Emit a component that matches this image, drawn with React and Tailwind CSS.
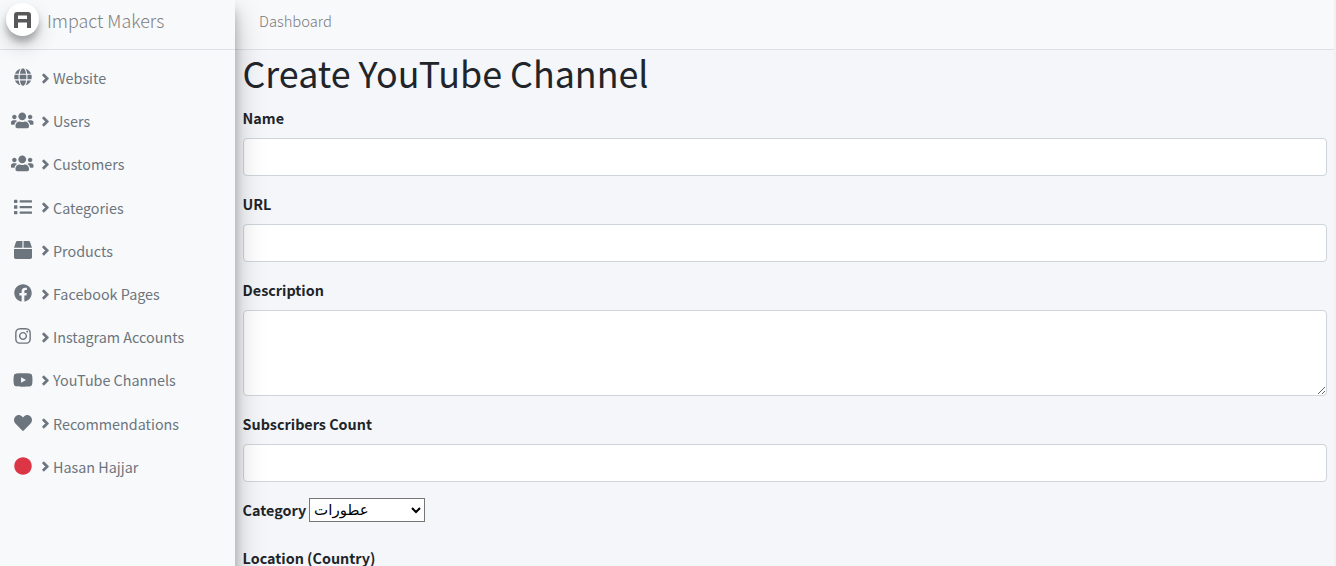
import React from 'react';
import { FaGlobe, FaUsers, FaList, FaBox, FaFacebook, FaInstagram, FaYoutube, FaHeart, FaCircle, FaAngleRight } from 'react-icons/fa';

const items = [
  ['Website', FaGlobe, 'size-[18px]'],
  ['Users', FaUsers, 'size-[22.5px]'],
  ['Customers', FaUsers, 'size-[22.5px]'],
  ['Categories', FaList, 'size-[18px]'],
  ['Products', FaBox, 'size-[18px]'],
  ['Facebook Pages', FaFacebook, 'size-[18px]'],
  ['Instagram Accounts', FaInstagram, 'size-[18px]'],
  ['YouTube Channels', FaYoutube, 'size-[20px]'],
  ['Recommendations', FaHeart, 'size-[18px]'],
  ['Hasan Hajjar', FaCircle, 'size-[18px] text-[#dc3545]'],
];

function Sidebar() {
  return (
    <aside className="relative z-10 h-[700px] w-[235px] shrink-0 bg-[#f8f9fb] shadow-[0_14px_28px_rgba(0,0,0,0.25),0_10px_10px_rgba(0,0,0,0.22)]">
      <div className="flex h-[50px] items-start border-b border-[#dee2e6] pl-[6px] pt-[3px]">
        <div className="flex size-[33px] items-center justify-center rounded-full bg-white shadow-[0_10px_20px_rgba(0,0,0,0.19),0_6px_6px_rgba(0,0,0,0.23)]">
          <svg className="h-4 w-[17px]" viewBox="0 0 17 16">
            <path d="M0 16V3Q0 0 3 0H14Q17 0 17 3V16H13V10.5H4V16ZM4 3.5V7H13V3.5Z" fill="#58585a" fillRule="evenodd" />
          </svg>
        </div>
        <span className="ml-2 mt-[2px] text-[17.9px] font-light leading-[30px] text-[#808081]">Impact Makers</span>
      </div>
      <nav className="flex flex-col pt-[6.5px] text-[#6c757d]">
        {items.map(([label, Icon, cls]) => (
          <a key={label} className="flex h-[43.2px] items-center">
            <span className="flex w-[45.4px] justify-center pb-[1.6px]">
              <Icon className={cls} />
            </span>
            <FaAngleRight className="-ml-[7px] mr-[-0.4px] size-[15px] stroke-current stroke-[20px]" />
            <span className="text-[14.35px] leading-6">{label}</span>
          </a>
        ))}
      </nav>
    </aside>
  );
}

function Field({ label, area }) {
  return (
    <div className="mb-4">
      <label className="mb-2 block text-[14.35px] font-bold leading-6 -ml-[0.4px]">{label}</label>
      {area ? (
        <textarea className="block h-[86px] w-full resize-y rounded border border-[#ced4da] bg-white outline-none" />
      ) : (
        <input className="block h-[38px] w-full rounded border border-[#ced4da] bg-white outline-none" />
      )}
    </div>
  );
}

export default function App() {
  return (
    <div className="flex h-[566px] w-full overflow-hidden bg-[#f4f6f9] font-['Noto_Sans_CJK_SC','Noto_Sans',sans-serif] text-[#212529]">
      <Sidebar />
      <main className="min-w-0 flex-1">
        <header className="flex h-[50px] border-b border-[#dee2e6] bg-[#f8f9fb] pl-6 pt-[9px]">
          <span className="text-[14.75px] font-light leading-6 text-[#7b7b7c]">Dashboard</span>
        </header>
        <div className="px-2 pr-[7px]">
          <h1 className="mb-2 h-12 whitespace-nowrap text-[35.85px] leading-[44px] -ml-[0.5px]">Create YouTube Channel</h1>
          <Field label="Name" />
          <Field label="URL" />
          <Field label="Description" area />
          <Field label="Subscribers Count" />
          <div className="-ml-[0.4px] mb-6 flex h-6 items-center gap-[3px]">
            <label className="text-[14.35px] font-bold leading-6">Category</label>
            <select className="h-6 w-[116px] border border-[#767676] bg-white pl-0 font-['DejaVu_Sans',sans-serif] text-[15px] leading-5 text-black">
              <option>عطورات</option>
            </select>
          </div>
          <label className="-ml-[0.4px] block text-[14.35px] font-bold leading-6">Location (Country)</label>
        </div>
      </main>
      <div className="w-[2px] shrink-0 bg-[#f1f1f1]" />
    </div>
  );
}
